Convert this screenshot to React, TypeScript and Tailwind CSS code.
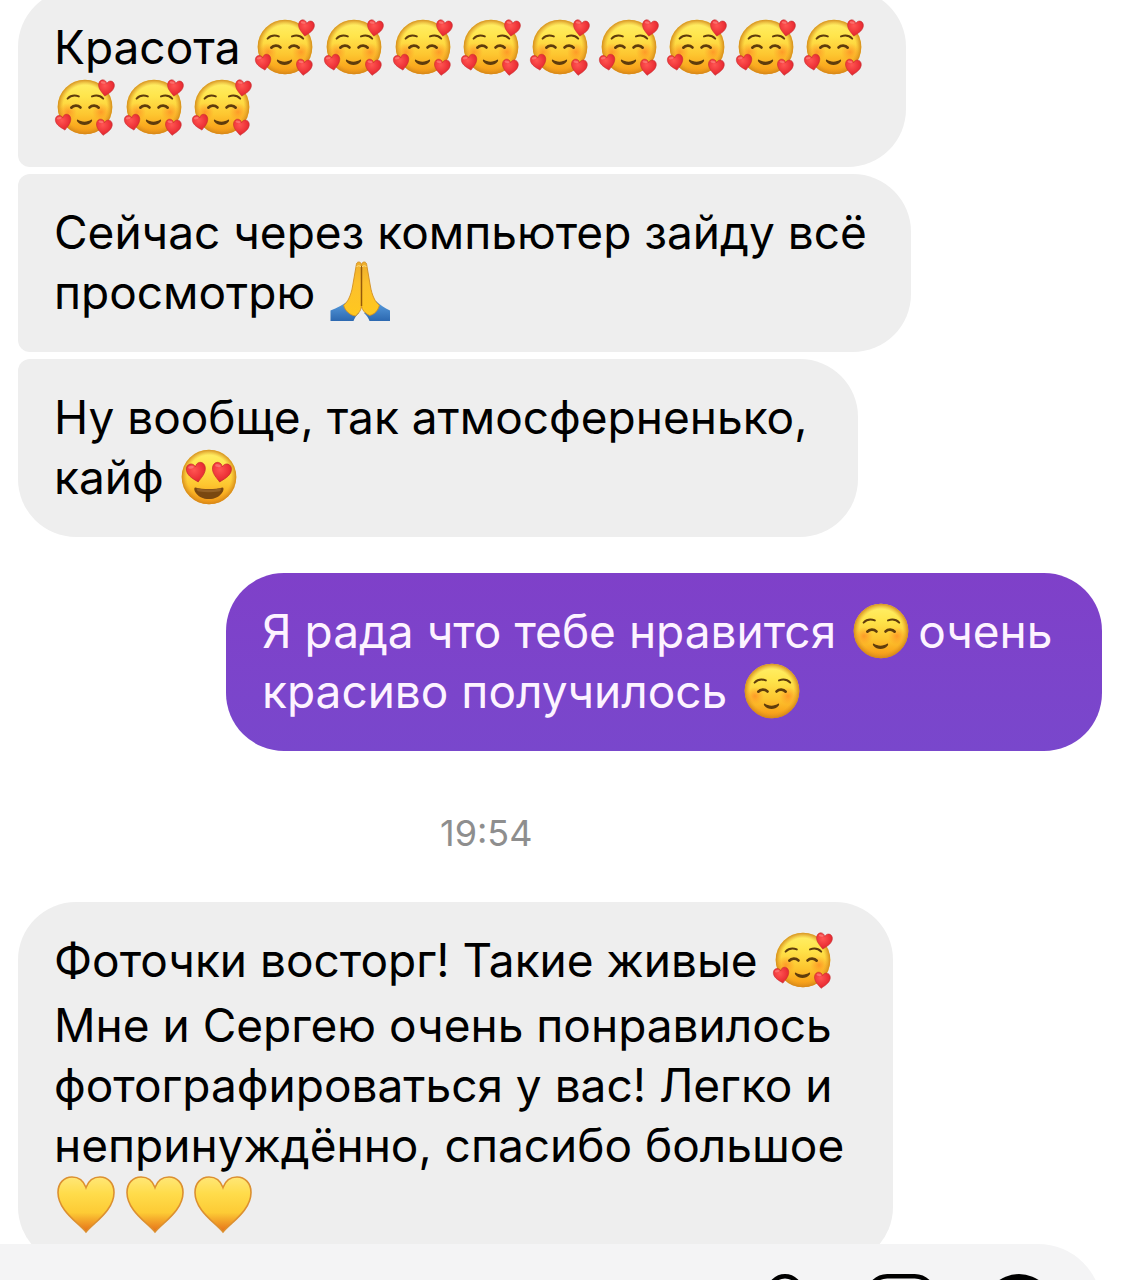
import type { ReactNode } from 'react';
import { clsx } from 'clsx';

type EmojiName = 'love' | 'smile' | 'heartEyes' | 'pray' | 'heart';

const HEART = 'M0 8.5C-3 5.5 -8.5 2 -8.5 -3.5C-8.5 -6.5 -6.5 -8.5 -4.2 -8.5C-2.2 -8.5 -0.7 -7.2 0 -5.2C0.7 -7.2 2.2 -8.5 4.2 -8.5C6.5 -8.5 8.5 -6.5 8.5 -3.5C8.5 2 3 5.5 0 8.5Z';

function Gradients() {
  return (
    <svg className="absolute size-0" aria-hidden="true">
      <defs>
        <linearGradient id="face" x1="0" y1="0" x2="0" y2="1">
          <stop offset="0" stopColor="#fff06a" />
          <stop offset="0.3" stopColor="#ffe54c" />
          <stop offset="0.65" stopColor="#fdc52f" />
          <stop offset="1" stopColor="#f79512" />
        </linearGradient>
        <radialGradient id="rim">
          <stop offset="0.8" stopColor="#e29a24" stopOpacity="0" />
          <stop offset="1" stopColor="#d08418" stopOpacity="0.9" />
        </radialGradient>
        <radialGradient id="blush">
          <stop offset="0" stopColor="#ff6a1c" stopOpacity="0.5" />
          <stop offset="1" stopColor="#ff7a1c" stopOpacity="0" />
        </radialGradient>
        <radialGradient id="red" cx="0.4" cy="0.35" r="0.7">
          <stop offset="0" stopColor="#ff5552" />
          <stop offset="0.7" stopColor="#ec3036" />
          <stop offset="1" stopColor="#cf2330" />
        </radialGradient>
        <linearGradient id="gold" x1="0" y1="0" x2="0" y2="1">
          <stop offset="0" stopColor="#ffe777" />
          <stop offset="0.3" stopColor="#ffdc4b" />
          <stop offset="0.65" stopColor="#fdcb35" />
          <stop offset="1" stopColor="#e56f18" />
        </linearGradient>
        <linearGradient id="skin" x1="0" y1="0" x2="0" y2="1">
          <stop offset="0" stopColor="#eeae2c" />
          <stop offset="0.4" stopColor="#fcc02c" />
          <stop offset="1" stopColor="#ffc81e" />
        </linearGradient>
        <linearGradient id="sleeve" x1="0" y1="0" x2="0" y2="1">
          <stop offset="0" stopColor="#5a9fe0" />
          <stop offset="1" stopColor="#2c68b0" />
        </linearGradient>
      </defs>
    </svg>
  );
}

function Face() {
  return (
    <>
      <circle cx="30" cy="29" r="27.3" fill="url(#face)" />
      <circle cx="30" cy="29" r="27.3" fill="url(#rim)" />
    </>
  );
}

function HappyFeatures() {
  return (
    <>
      <circle cx="13" cy="34" r="9" fill="url(#blush)" />
      <circle cx="46" cy="34" r="9" fill="url(#blush)" />
      <g fill="none" stroke="#5f3c0c" strokeWidth="2" strokeLinecap="round">
        <path d="M12.6 20.6C15.5 17.6 19.5 16.9 23.8 18.4" />
        <path d="M37 18.4C41.3 16.9 45.3 17.6 48.2 20.6" />
      </g>
      <g fill="none" stroke="#5f3c0c" strokeWidth="2.8" strokeLinecap="round">
        <path d="M16.4 29.6C18.5 26.9 23 26.9 25.4 29.4" />
        <path d="M34.6 29.4C37 26.9 41.5 26.9 43.6 29.6" />
      </g>
      <path d="M22.6 41.6C26.6 44.4 32.4 44.4 36.4 41.6C37.4 41.6 37.3 43 36.6 43.8C32.8 48.2 26.2 48.2 22.4 43.8C21.7 43 21.6 41.6 22.6 41.6Z" fill="#5f3c0c" />
    </>
  );
}

function RedHeart({ transform }: { transform: string }) {
  return (
    <g transform={transform}>
      <path d={HEART} fill="url(#red)" stroke="#c62a2c" strokeWidth="0.6" />
      <ellipse cx="-4" cy="-5.6" rx="2.6" ry="1.3" fill="#ff9a94" opacity="0.5" />
    </g>
  );
}

const drawings: Record<EmojiName, ReactNode> = {
  love: (
    <>
      <Face />
      <HappyFeatures />
      <RedHeart transform="translate(51 10.3) rotate(9) scale(0.93)" />
      <RedHeart transform="translate(8.6 44.5) rotate(-10) scale(0.91)" />
      <RedHeart transform="translate(49 49.5) rotate(7) scale(0.93)" />
    </>
  ),
  smile: (
    <>
      <Face />
      <HappyFeatures />
    </>
  ),
  heartEyes: (
    <>
      <Face />
      <RedHeart transform="translate(17.5 24.6) rotate(-10) scale(1.12)" />
      <RedHeart transform="translate(42.3 24.6) rotate(10) scale(1.12)" />
      <path d="M16.4 39.4C24 41.6 35.8 41.6 43.4 39.4C44.8 39.4 44.8 41.4 43.9 43.4C38.6 53.6 21.2 53.6 15.9 43.4C15 41.4 15 39.4 16.4 39.4Z" fill="#7a4810" />
      <path d="M17.6 40.2C25 42 34.8 42 42.2 40.2C42 42.2 41.4 43.3 39.8 43.6C33.5 44.4 26.3 44.4 20 43.6C18.4 43.3 17.8 42.2 17.6 40.2Z" fill="#936025" />
    </>
  ),
  pray: (
    <>
      <path d="M0.5 47.5C7 45 13 42 18 38L29 50C26 53 24.5 55 23.5 58H0.5Z" fill="url(#sleeve)" />
      <path d="M60 47.5C54.5 45 50 42 46 38L34 50C37 53 38.5 55 39.5 58H60Z" fill="url(#sleeve)" />
      <path d="M31.5 3C31.5 0.5 30.6 -1 28.8 -1C27 -1 26.4 0.3 26.1 3L22.8 22C21.8 28 20.6 32 18.6 36C17.4 38.6 15.4 40.6 13.6 42.2C15 47.5 19.4 52 25.4 53C29 50.5 31.5 46.5 31.5 42Z" fill="url(#skin)" stroke="#d38f20" strokeWidth="0.9" />
      <path d="M31.5 3C31.5 0.5 32.4 -1 34.2 -1C36 -1 36.6 0.3 36.9 3L40.2 22C41.2 28 42.4 32 44.4 36C45.6 38.6 47.6 40.6 49.4 42.2C48 47.5 44.6 51.4 39.6 52.4C35 50.5 31.5 46.5 31.5 42Z" fill="url(#skin)" stroke="#d38f20" strokeWidth="0.9" />
      <path d="M31.5 3V43" fill="none" stroke="#94590c" strokeWidth="1.5" />
      <path d="M26.6 4C26.8 2.4 30.4 2.4 31 4M32 4C32.6 2.4 36.2 2.4 36.4 4" fill="none" stroke="#ffe08a" strokeWidth="1" />
    </>
  ),
  heart: (
    <path
      d="M31 56C24.5 48.5 16 43 9.5 34C5.6 28.6 3 22.6 3 16.4C3 7 9.3 1 17 1C23.5 1 28.7 5 31 11.5C33.3 5 38.5 1 45 1C52.7 1 59 7 59 16.4C59 22.6 56.4 28.6 52.5 34C46 43 37.5 48.5 31 56Z"
      fill="url(#gold)"
      stroke="#dc9030"
      strokeWidth="1.6"
    />
  ),
};

const labels: Record<EmojiName, string> = {
  love: 'smiling face with hearts',
  smile: 'smiling face',
  heartEyes: 'heart eyes',
  pray: 'folded hands',
  heart: 'yellow heart',
};

function Emoji({ name }: { name: EmojiName }) {
  return (
    <svg viewBox="-1 -1 60 60" className="size-[60px] shrink-0 overflow-visible" role="img" aria-label={labels[name]}>
      {drawings[name]}
    </svg>
  );
}

function EmojiRow({ name, count, className }: { name: EmojiName; count: number; className: string }) {
  return (
    <span className={clsx('flex justify-between', className)}>
      {Array.from({ length: count }, (_, i) => (
        <Emoji key={i} name={name} />
      ))}
    </span>
  );
}

function Line({ children }: { children: ReactNode }) {
  return <p className="flex h-[60px] items-center gap-[14px] whitespace-nowrap">{children}</p>;
}

function Bubble({ className, children }: { className: string; children: ReactNode }) {
  return (
    <div className={clsx('max-w-full shrink-0 px-9 pt-7 pb-[30px] text-[46px] leading-[60px]', className)}>
      {children}
    </div>
  );
}

function Composer() {
  return (
    <footer className="h-9 shrink-0 overflow-hidden pr-6">
      <div className="flex h-32 items-start justify-end rounded-tr-[64px] bg-[#f4f4f5] pt-[30px] pr-12">
        <button aria-label="Голосовое сообщение" className="mr-12">
          <svg viewBox="0 0 66 66" className="size-[66px]" fill="none" stroke="#000" strokeWidth="4.5" strokeLinecap="round">
            <rect x="17.25" y="2.25" width="31.5" height="41" rx="15.75" />
            <path d="M8 32C8 62 58 62 58 32M33 55V64" />
          </svg>
        </button>
        <button aria-label="Галерея" className="mr-12">
          <svg viewBox="0 0 70 70" className="size-[70px]" fill="none" stroke="#000" strokeWidth="4.5" strokeLinejoin="round">
            <rect x="2.25" y="2.25" width="65.5" height="65.5" rx="19" />
            <circle cx="23" cy="24" r="5" />
            <path d="M4 55L23 39L36 50L49 33L67 50" />
          </svg>
        </button>
        <button aria-label="Добавить">
          <svg viewBox="0 0 70 70" className="size-[70px]" fill="none">
            <circle cx="35" cy="35" r="35" fill="#000" />
            <path d="M35 19V51M19 35H51" stroke="#fff" strokeWidth="5" strokeLinecap="round" />
          </svg>
        </button>
      </div>
    </footer>
  );
}

export default function App() {
  return (
    <div className="flex h-screen flex-col overflow-hidden bg-white font-['Inter','Noto_Sans',sans-serif] text-black">
      <Gradients />
      <main className="flex min-h-0 flex-1 flex-col items-start overflow-hidden pr-6 pl-[18px]">
        <div className="-mt-[11px] flex shrink-0 flex-col items-start gap-[7px]">
          <Bubble className="w-[888px] rounded-[58px] rounded-bl-xl bg-[#eeeeee]">
            <Line>
              Красота <EmojiRow name="love" count={9} className="w-[609px]" />
            </Line>
            <Line>
              <EmojiRow name="love" count={3} className="w-[197px]" />
            </Line>
          </Bubble>
          <Bubble className="w-[893px] rounded-[58px] rounded-l-xl bg-[#eeeeee]">
            <Line>Сейчас через компьютер зайду всё</Line>
            <Line>
              просмотрю <Emoji name="pray" />
            </Line>
          </Bubble>
          <Bubble className="w-[840px] rounded-[58px] rounded-tl-xl bg-[#eeeeee]">
            <Line>Ну вообще, так атмосферненько,</Line>
            <Line>
              кайф <Emoji name="heartEyes" />
            </Line>
          </Bubble>
        </div>

        <Bubble className="mt-9 w-[876px] self-end rounded-[58px] bg-linear-to-b from-[#7f40c9] to-[#7947cc] text-[#fdf3ff]">
          <Line>
            Я рада что тебе нравится
            <span className="flex gap-2">
              <Emoji name="smile" />
              очень
            </span>
          </Line>
          <Line>
            красиво получилось <Emoji name="smile" />
          </Line>
        </Bubble>

        <time className="mt-[61px] mb-[47px] ml-[422px] shrink-0 text-4xl leading-[43px] text-[#8e8e8e]">19:54</time>

        <Bubble className="w-[875px] rounded-[58px] bg-[#eeeeee]">
          <div className="mb-[5px]">
            <Line>
              Фоточки восторг! Такие живые <Emoji name="love" />
            </Line>
          </div>
          <Line>Мне и Сергею очень понравилось</Line>
          <Line>фотографироваться у вас! Легко и</Line>
          <Line>непринуждённо, спасибо большое</Line>
          <Line>
            <EmojiRow name="heart" count={3} className="w-[197px]" />
          </Line>
        </Bubble>
      </main>
      <Composer />
    </div>
  );
}
